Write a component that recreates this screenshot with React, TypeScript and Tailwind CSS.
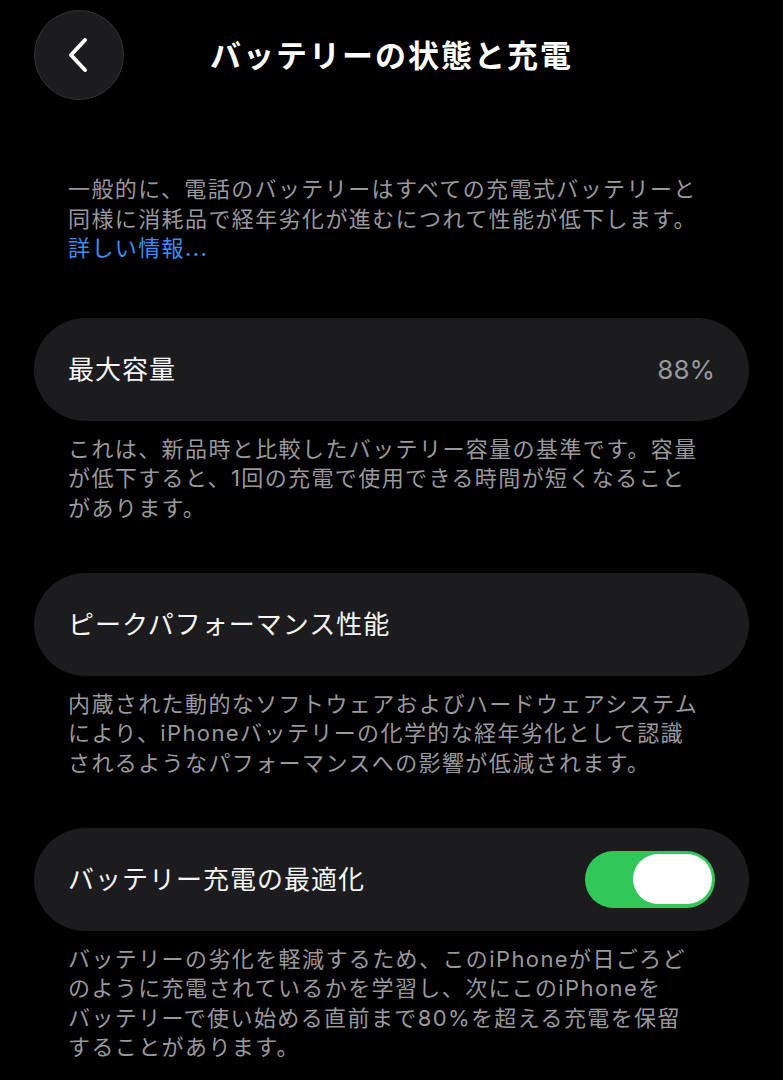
import React from "react";

const font = { fontFamily: 'Inter, "Noto Sans CJK JP", sans-serif' };

function Card({ children }: { children: React.ReactNode }) {
  return (
    <div className="mx-[34px] flex h-[103px] items-center justify-between rounded-full bg-[#1c1c1e] px-[34px]">
      {children}
    </div>
  );
}

function Desc({ lines, last }: { lines: string[]; last?: boolean }) {
  return (
    <div
      className={`px-[68px] pt-[14px] text-[22px] leading-[29.5px] tracking-[1.4px] text-[#98989d] ${
        last ? "" : "pb-[49.5px]"
      }`}
    >
      {lines.map((l, i) => (
        <div key={i} className="whitespace-nowrap">
          {l}
        </div>
      ))}
    </div>
  );
}

export default function App() {
  return (
    <div className="min-h-[1080px] w-full bg-black text-white" style={font}>
      <div className="grid grid-cols-[90px_1fr_90px] items-center px-[34px] pt-[10px]">
        <div className="flex h-[90px] w-[90px] items-center justify-center rounded-full border border-[#333336] bg-[#1c1c1e]">
          <svg width="24" height="36" viewBox="0 0 24 36" className="-ml-[2px]">
            <path
              d="M19 3 L5 18 L19 33"
              fill="none"
              stroke="white"
              strokeWidth="4"
              strokeLinecap="round"
              strokeLinejoin="round"
            />
          </svg>
        </div>
        <div className="text-center text-[31px] font-bold tracking-[2px] leading-none">
          バッテリーの状態と充電
        </div>
        <div />
      </div>

      <div className="mt-[75px] px-[68px] text-[22px] leading-[29.5px] tracking-[1.4px] text-[#98989d]">
        <div className="whitespace-nowrap">一般的に、電話のバッテリーはすべての充電式バッテリーと</div>
        <div className="whitespace-nowrap">同様に消耗品で経年劣化が進むにつれて性能が低下します。</div>
        <div className="whitespace-nowrap text-[#3d8ef5]">詳しい情報...</div>
      </div>

      <div className="mt-[54px]">
        <Card>
          <span className="text-[26px] tracking-[1px] text-[#f5f5f7]">最大容量</span>
          <span className="text-[26px] text-[#98989d]">88%</span>
        </Card>
        <Desc
          lines={[
            "これは、新品時と比較したバッテリー容量の基準です。容量",
            "が低下すると、1回の充電で使用できる時間が短くなること",
            "があります。",
          ]}
        />
        <Card>
          <span className="text-[26px] tracking-[1px] text-[#f5f5f7]">ピークパフォーマンス性能</span>
        </Card>
        <Desc
          lines={[
            "内蔵された動的なソフトウェアおよびハードウェアシステム",
            "により、iPhoneバッテリーの化学的な経年劣化として認識",
            "されるようなパフォーマンスへの影響が低減されます。",
          ]}
        />
        <Card>
          <span className="text-[26px] tracking-[1px] text-[#f5f5f7]">バッテリー充電の最適化</span>
          <div className="flex h-[57px] w-[130px] items-center justify-end rounded-full bg-[#32c759] pr-[3px]">
            <div className="h-[50px] w-[79px] rounded-full bg-white" />
          </div>
        </Card>
        <Desc
          last
          lines={[
            "バッテリーの劣化を軽減するため、このiPhoneが日ごろど",
            "のように充電されているかを学習し、次にこのiPhoneを",
            "バッテリーで使い始める直前まで80%を超える充電を保留",
            "することがあります。",
          ]}
        />
      </div>
    </div>
  );
}
